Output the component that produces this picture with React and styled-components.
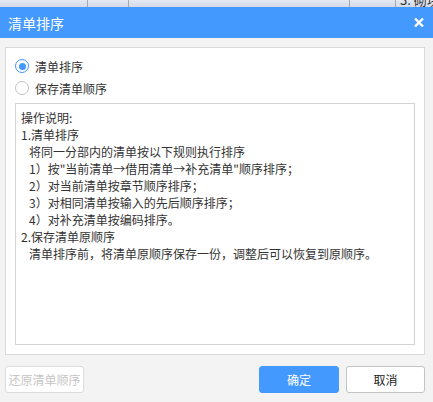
import React, { useState } from "react";
import styled, { createGlobalStyle } from "styled-components";

const GlobalStyle = createGlobalStyle`
  html, body {
    margin: 0;
    padding: 0;
    background: #f3f3f3;
  }
  body {
    font-family: "Noto Sans CJK SC", "Liberation Sans", sans-serif;
    color: #333;
  }
`;

const Page = styled.div`
  width: 433px;
  height: 402px;
  display: flex;
  flex-direction: column;
  overflow: hidden;
`;

// strip of the grid behind the dialog
const GridStrip = styled.div`
  height: 7px;
  display: grid;
  grid-template-columns: 88px 41px 221px 46px 1fr;
  background: linear-gradient(#e4e9f2, #d3dae7);
  overflow: hidden;
`;

const GridCell = styled.div`
  border-right: ${(p) => (p.last ? "none" : "1px solid #a8a8a8")};
  overflow: hidden;
  font-size: 13px;
  line-height: 13px;
  color: #333;
  padding-left: 4px;
`;

const ClippedText = styled.span`
  display: block;
  margin-top: -7px;
  white-space: nowrap;
`;

const TitleBar = styled.div`
  height: 31px;
  background: #4499ff;
  display: flex;
  align-items: center;
  justify-content: space-between;
  padding: 0 8px 0 8px;
`;

const Title = styled.span`
  color: #fff;
  font-size: 14px;
`;

const CloseBtn = styled.button`
  border: none;
  background: transparent;
  padding: 0;
  width: 12px;
  height: 12px;
  display: flex;
  align-items: center;
  justify-content: center;
  cursor: pointer;
`;

const Body = styled.div`
  flex: 1;
  display: flex;
  flex-direction: column;
  padding: 9px 8px 9px 5px;
`;

const Panel = styled.div`
  height: 308px;
  box-sizing: border-box;
  border: 1px solid #d9d9d9;
  background: #fff;
  padding: 7px 9px 9px 9px;
  display: flex;
  flex-direction: column;
`;

const RadioRow = styled.label`
  height: 22px;
  display: flex;
  align-items: center;
  gap: 6px;
  font-size: 12px;
  color: #333;
  cursor: pointer;
`;

const RadioCircle = styled.span`
  width: 14px;
  height: 14px;
  box-sizing: border-box;
  border-radius: 50%;
  border: 1px solid ${(p) => (p.checked ? "#4499ff" : "#c4c4c4")};
  display: flex;
  align-items: center;
  justify-content: center;
  background: #fff;
  &::after {
    content: "";
    width: 7px;
    height: 7px;
    border-radius: 50%;
    background: ${(p) => (p.checked ? "#4499ff" : "transparent")};
  }
`;

const Notes = styled.div`
  flex: 1;
  margin-top: 4px;
  border: 1px solid #d4d4d4;
  padding: 5px 5px;
  font-size: 12px;
  line-height: 17px;
  color: #333;
`;

const NoteLine = styled.div`
  padding-left: ${(p) => (p.indent ? "8px" : "0")};
  white-space: nowrap;
`;

const Footer = styled.div`
  margin-top: 11px;
  display: flex;
  align-items: center;
  gap: 7px;
`;

const Button = styled.button`
  width: ${(p) => p.w || 79}px;
  height: 27px;
  box-sizing: border-box;
  border-radius: 3px;
  font-family: inherit;
  font-size: 12px;
  padding: 0;
  border: 1px solid ${(p) => (p.primary ? "#4499ff" : p.disabled ? "#dcdcdc" : "#c4c4c4")};
  background: ${(p) => (p.primary ? "#4499ff" : "#fff")};
  color: ${(p) => (p.primary ? "#fff" : p.disabled ? "#c6c6c6" : "#222")};
  cursor: ${(p) => (p.disabled ? "default" : "pointer")};
`;

const Spacer = styled.div`
  flex: 1;
`;

const notes = [
  { text: "操作说明:" },
  { text: "1.清单排序" },
  { text: "将同一分部内的清单按以下规则执行排序", indent: true },
  { text: "1）按\"当前清单→借用清单→补充清单\"顺序排序；", indent: true },
  { text: "2）对当前清单按章节顺序排序；", indent: true },
  { text: "3）对相同清单按输入的先后顺序排序；", indent: true },
  { text: "4）对补充清单按编码排序。", indent: true },
  { text: "2.保存清单原顺序" },
  { text: "清单排序前，将清单原顺序保存一份，调整后可以恢复到原顺序。", indent: true },
];

const App = () => {
  const [mode, setMode] = useState("sort");

  return (
    <Page>
      <GlobalStyle />
      <GridStrip>
        <GridCell />
        <GridCell />
        <GridCell />
        <GridCell />
        <GridCell last>
          <ClippedText>3. 砌块</ClippedText>
        </GridCell>
      </GridStrip>
      <TitleBar>
        <Title>清单排序</Title>
        <CloseBtn>
          <svg width="10" height="9" viewBox="0 0 10 9">
            <path d="M1 0.5 L9 8.5 M9 0.5 L1 8.5" stroke="#fff" strokeWidth="2.4" />
          </svg>
        </CloseBtn>
      </TitleBar>
      <Body>
        <Panel>
          <RadioRow onClick={() => setMode("sort")}>
            <RadioCircle checked={mode === "sort"} />
            清单排序
          </RadioRow>
          <RadioRow onClick={() => setMode("keep")}>
            <RadioCircle checked={mode === "keep"} />
            保存清单顺序
          </RadioRow>
          <Notes>
            {notes.map((n, i) => (
              <NoteLine key={i} indent={n.indent}>
                {n.text}
              </NoteLine>
            ))}
          </Notes>
        </Panel>
        <Footer>
          <Button disabled>还原清单顺序</Button>
          <Spacer />
          <Button primary w={80}>确定</Button>
          <Button>取消</Button>
        </Footer>
      </Body>
    </Page>
  );
};

export default App;
